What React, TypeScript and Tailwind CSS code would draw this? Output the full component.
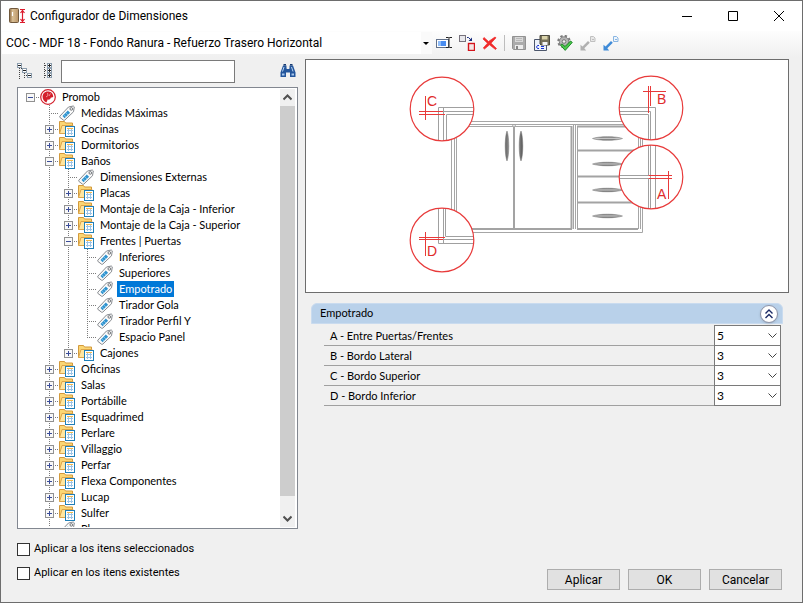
import { useState } from 'react';
import type { ReactNode } from 'react';

type IconKind = 'root' | 'tag' | 'folder';

interface TreeNode {
  label: string;
  kind: IconKind;
  open?: boolean;
  children?: TreeNode[];
}

const folder = (label: string, children: TreeNode[] = [], open = false): TreeNode => ({
  label,
  kind: 'folder',
  open,
  children,
});

const tag = (label: string): TreeNode => ({ label, kind: 'tag' });

const tree: TreeNode = {
  label: 'Promob',
  kind: 'root',
  open: true,
  children: [
    tag('Medidas Máximas'),
    folder('Cocinas'),
    folder('Dormitorios'),
    folder(
      'Baños',
      [
        tag('Dimensiones Externas'),
        folder('Placas'),
        folder('Montaje de la Caja - Inferior'),
        folder('Montaje de la Caja - Superior'),
        folder(
          'Frentes | Puertas',
          [
            tag('Inferiores'),
            tag('Superiores'),
            tag('Empotrado'),
            tag('Tirador Gola'),
            tag('Tirador Perfil Y'),
            tag('Espacio Panel'),
          ],
          true
        ),
        folder('Cajones'),
      ],
      true
    ),
    folder('Oficinas'),
    folder('Salas'),
    folder('Portábille'),
    folder('Esquadrimed'),
    folder('Perlare'),
    folder('Villaggio'),
    folder('Perfar'),
    folder('Flexa Componentes'),
    folder('Lucap'),
    folder('Sulfer'),
    tag('Plus'),
  ],
};

const fields = [
  { id: 'a', label: 'A - Entre Puertas/Frentes', value: '5' },
  { id: 'b', label: 'B - Bordo Lateral', value: '3' },
  { id: 'c', label: 'C - Bordo Superior', value: '3' },
  { id: 'd', label: 'D - Bordo Inferior', value: '3' },
];

function NodeIcon({ kind }: { kind: IconKind }) {
  if (kind === 'root') {
    return (
      <svg className="size-4 shrink-0" viewBox="0 0 16 16">
        <circle cx="8" cy="8" r="7.3" fill="#fff" stroke="#d3202c" strokeWidth="1.2" />
        <path d="M8.5 2.5C5 2 2.500 4.500 2.600 8c.1 2.500 1.500 4.500 3.600 5.400.9-.6 1.300-1.600 1.200-2.800 1.800.2 3.300-.5 3.300-1.900l2.500-.7c.2-3-1.900-5.200-4.700-5.500z" fill="#d3202c" />
        <path d="M7.500 4l.5 2.500-2 1.500M10.500 4.500L9 7" stroke="#f3b0b3" strokeWidth=".8" fill="none" />
      </svg>
    );
  }
  if (kind === 'tag') {
    return (
      <svg className="size-4 shrink-0" viewBox="0 0 16 16">
        <path d="M.8 11.200L9.500 2l4.800-1 1 .9-.8 4.900-8.800 8.400h-1.200L.8 12.300z" fill="#fafafa" stroke="#85898e" />
        <path d="M3.500 11L8.800 5.400l2.300 2.300-5.500 5.500z" fill="#2f93cf" />
        <path d="M5 9.800l2.300 2.300M6.800 7.900l2.300 2.300" stroke="#9fd2ee" strokeWidth=".7" />
        <circle cx="12.300" cy="3.900" r="1.300" fill="#fff" stroke="#6e7277" />
      </svg>
    );
  }
  return (
    <svg className="size-4 shrink-0" viewBox="0 0 16 16">
      <path d="M.5 12.500v-12h5l1 1.500h7v4" fill="#fbd674" stroke="#d39a3c" />
      <path d="M.5 12.500l2.500-8h11v8z" fill="#ffe6a0" stroke="#dca54a" />
      <rect x="6.500" y="5.500" width="9" height="10" fill="#fff" stroke="#1f7fb8" />
      <rect x="8" y="7" width="6" height="1" fill="#f2b84b" />
      <path d="M8 9.500h6M8 12.500h6M9.500 8v6M12.500 8v6" stroke="#9cc4e6" />
    </svg>
  );
}

interface GuideProps {
  top?: boolean;
  bottom?: boolean;
  branch?: boolean;
  expander?: 'plus' | 'minus';
}

// One 19px column of the dotted connector lines
function Guide({ top, bottom, branch, expander }: GuideProps) {
  return (
    <svg className="h-4 w-[19px] shrink-0" viewBox="0 0 19 16" stroke="#7d7d7d" fill="none" shapeRendering="crispEdges">
      {top && <path d="M9.500 0V8" strokeDasharray="1 1" />}
      {bottom && <path d="M9.500 8V16" strokeDasharray="1 1" />}
      {branch && <path d="M9 8.500H19" strokeDasharray="1 1" />}
      {expander && (
        <>
          <rect x="5.500" y="4.500" width="8" height="8" fill="#f8f8f8" stroke="#919191" />
          <path d="M7 8.500h5" stroke="#3a4c98" />
          {expander === 'plus' && <path d="M9.500 6v5" stroke="#3a4c98" />}
        </>
      )}
    </svg>
  );
}

interface TreeRowProps {
  node: TreeNode;
  depth: number;
  last: boolean;
  lines: boolean[];
  selected: string;
  onSelect: (label: string) => void;
}

function TreeRow({ node, depth, last, lines, selected, onSelect }: TreeRowProps) {
  const [open, setOpen] = useState(!!node.open);
  const isSelected = selected === node.label;
  const guide = (
    <Guide top={depth > 0} bottom={depth > 0 && !last} branch expander={node.children ? (open ? 'minus' : 'plus') : undefined} />
  );

  return (
    <li>
      <div className="flex h-4 items-center">
        {lines.map((on, i) => (
          <Guide key={i} top={on} bottom={on} />
        ))}
        {node.children ? (
          <button aria-label={node.label} onClick={() => setOpen(!open)} className="shrink-0">
            {guide}
          </button>
        ) : (
          guide
        )}
        <NodeIcon kind={node.kind} />
        <button
          onClick={() => onSelect(node.label)}
          className={`ml-1 h-4 px-0.5 leading-4 whitespace-nowrap ${isSelected ? 'bg-[#0078d7] text-white' : ''}`}
        >
          {node.label}
        </button>
      </div>
      {open && node.children && (
        <ul>
          {node.children.map((child, i) => (
            <TreeRow
              key={child.label}
              node={child}
              depth={depth + 1}
              last={i === node.children!.length - 1}
              lines={[...lines, depth > 0 && !last]}
              selected={selected}
              onSelect={onSelect}
            />
          ))}
        </ul>
      )}
    </li>
  );
}

function ToolButton({ label, disabled, children }: { label: string; disabled?: boolean; children: ReactNode }) {
  return (
    <button aria-label={label} disabled={disabled} className="flex h-[22px] w-[23px] items-center justify-center">
      <svg className="size-4" viewBox="0 0 16 16" fill="none">
        {children}
      </svg>
    </button>
  );
}

function Toolbar() {
  return (
    <div className="flex items-center">
      <ToolButton label="Renombrar">
        <rect x=".5" y="4.500" width="12" height="8" fill="#fff" stroke="#62718a" />
        <rect x="2" y="6" width="8" height="5" fill="#4a8df0" />
        <path d="M2 6h3v5H2z" fill="#8fbcf8" />
        <path d="M10 2.500h2.500l.5.500.5-.5H16M13 3v9M10 12.500h2.500l.5-.5.5.500H16" stroke="#222" />
      </ToolButton>
      <ToolButton label="Copiar">
        <rect x=".5" y=".5" width="6" height="6" fill="#e8e8ec" stroke="#77727c" />
        <rect x="9.500" y="8.500" width="6" height="7" fill="#f4e6e6" stroke="#d4141c" strokeWidth="1.400" />
        <path d="M8 2.500h1.500L12 5" stroke="#1c2f80" />
        <path d="M13 2.500V6H9.500z" fill="#1c2f80" />
      </ToolButton>
      <ToolButton label="Eliminar">
        <path d="M2 2.500l4.500 4L13 2l1 .8-5 5.400 5.500 5.300-1 1L7.500 9.800 2.500 14 1.300 13l4.200-4.800L1 4z" fill="#f02a2a" stroke="#f02a2a" strokeWidth=".7" />
      </ToolButton>
      <div className="mr-0.5 ml-[3px] h-4 w-px bg-[#bdbdbd]" />
      <ToolButton label="Guardar" disabled>
        <path d="M1.500 1.500h13v13h-12l-1-1z" fill="#ababab" stroke="#929292" />
        <path d="M4 2h8v5H4z" fill="#d9d9d9" />
        <path d="M4 10h8v4H4z" fill="#ececec" />
        <path d="M5 11h2v3H5z" fill="#858585" />
        <path d="M5 3.500h6M5 5.500h6" stroke="#b8b8b8" />
      </ToolButton>
      <ToolButton label="Guardar como">
        <path d="M.5 15.500v-11h12v11z" fill="#eef3fa" stroke="#4c566b" />
        <path d="M6 .5h9.500V10H7L6 9z" fill="#77715a" stroke="#4c4a3f" />
        <path d="M8 1h5.500v3.500H8z" fill="#d9d2a9" />
        <path d="M8.500 7h5v3h-5z" fill="#f4f4f4" />
        <path d="M5 10.500H3.500L2.500 12l1 1.500H5M7 11.500h3M7 13.500h3" stroke="#1731d6" />
      </ToolButton>
      <ToolButton label="Validar">
        <circle cx="7" cy="6.500" r="5.600" stroke="#7b7b7b" strokeWidth="2.200" strokeDasharray="2.300 2.100" />
        <circle cx="7" cy="6.500" r="4.700" fill="#b5b5b5" stroke="#858585" />
        <circle cx="7" cy="6.500" r="1.800" fill="#f2f2f2" stroke="#777" />
        <path d="M3.500 10.200L5 8.900l3 2.700 5.600-5.600 1.700 1.400-7.100 8z" fill="#4cc74c" stroke="#178224" strokeWidth=".9" />
      </ToolButton>
      <ToolButton label="Importar" disabled>
        <path d="M.5 15.500V9.800l2 1.700 5.500-5.500 1.800 1.800-5.500 5.500 1.900 2.200z" fill="#b0b0b0" />
        <path d="M10.500 1.500h3l1.500 1.500v3.500h-4.500zM12 4.500h2" fill="#e7e7e7" stroke="#c0c0c0" />
      </ToolButton>
      <ToolButton label="Exportar">
        <path d="M.5 15.500V9.800l2 1.700 5.500-5.500 1.800 1.800-5.500 5.500 1.900 2.200z" fill="#3f8bd8" />
        <path d="M10.500 1.500h3l1.500 1.500v3.500h-4.500zM12 4.500h2" fill="#eef5fc" stroke="#88b5e2" />
      </ToolButton>
    </div>
  );
}

const hinges = [
  { id: 'c', cx: 442, cy: 109 },
  { id: 'b', cx: 651, cy: 108 },
  { id: 'a', cx: 651, cy: 177 },
  { id: 'd', cx: 442, cy: 240 },
];

function CabinetDrawing() {
  return (
    <svg className="h-[232px] w-[300px]" viewBox="397 60 300 232" fill="none" role="img" aria-label="Empotrado">
      <defs>
        {hinges.map((h) => (
          <clipPath key={h.id} id={`lens-${h.id}`}>
            <circle cx={h.cx} cy={h.cy} r="32" />
          </clipPath>
        ))}
        <linearGradient id="handle" x1="0" x2="0" y1="0" y2="1">
          <stop offset="0" stopColor="#666" />
          <stop offset=".5" stopColor="#c4c4c4" />
          <stop offset="1" stopColor="#555" />
        </linearGradient>
        <linearGradient id="handle-v">
          <stop offset="0" stopColor="#666" />
          <stop offset=".5" stopColor="#c4c4c4" />
          <stop offset="1" stopColor="#555" />
        </linearGradient>
      </defs>

      {/* Carcass */}
      <g stroke="#a6a6a6">
        <path d="M451.500 121.500H642.500V232.500H451.500z" />
        <path d="M454 124.500H640M454.500 124V230M456.500 126V229M456 126.500H572" />
        <path d="M573.500 124V229M575.500 124V229M638.500 126V229M640.500 124V229" />
      </g>
      <g stroke="#a3a3a3">
        <path d="M456 229H572M571.500 126V229M514 126V229" strokeWidth="2" />
        <path d="M577 126.500H638M577 150.500H638M577 176.500H638M577 202.500H638M577 229H638" strokeWidth="1.800" />
        <path d="M577.500 126V229" />
      </g>
      <path d="M512 125h4l-2 2z" fill="#fff" stroke="#a3a3a3" strokeWidth=".6" />
      <g fill="url(#handle-v)" stroke="#777" strokeWidth=".5">
        <path d="M507 131c2.400 6 2.400 24 0 30c-2.400-6-2.400-24 0-30zM521 131c2.400 6 2.400 24 0 30c-2.400-6-2.400-24 0-30z" />
      </g>
      <g fill="url(#handle)" stroke="#777" strokeWidth=".5">
        {[138.500, 164, 190, 216].map((y) => (
          <path key={y} d={`M592.500 ${y}c6-2.400 24-2.400 30 0c-6 2.400-24 2.400-30 0z`} />
        ))}
      </g>

      {/* Magnified corners */}
      {hinges.map((h) => (
        <circle key={h.id} cx={h.cx} cy={h.cy} r="32" fill="#fff" />
      ))}
      <g stroke="#a0a0a0">
        <path clipPath="url(#lens-c)" d="M438.500 142V107.500H475M443.500 142V107.500M438 111.500H475M446.500 142V114.500H475" />
        <path clipPath="url(#lens-b)" d="M618 107.500H655.500V142M618 111.500H650.500V142M618 114.500H648.500V142" />
        <path clipPath="url(#lens-a)" d="M655.500 144V210M650.500 144V210M648.500 144V175.500H618M618 178.500H648.500V210" />
        <path clipPath="url(#lens-d)" d="M438.500 207V243.500H475M443.500 207V243.500M443 239.500H475M445.500 207V236.500H475" />
      </g>
      <g stroke="#e83a3a">
        {hinges.map((h) => (
          <circle key={h.id} cx={h.cx} cy={h.cy} r="31.800" strokeWidth="1.200" />
        ))}
        <path d="M425.500 96V120M419 111.500H443M419 114.500H445" />
        <path d="M648.500 86V113M650.500 86V106M643 91.500H666" />
        <path d="M648.500 175.500H672M648.500 178.500H672M668.500 171V199" />
        <path d="M419 237.500H445M419 239.500H443M425.500 232V256" />
      </g>
      <g fill="#e02b2b" className="font-['Liberation_Sans',sans-serif] text-[14px]">
        <text x="427" y="106">C</text>
        <text x="657" y="104">B</text>
        <text x="657" y="199">A</text>
        <text x="427" y="256">D</text>
      </g>
    </svg>
  );
}

function Chevron({ className, up }: { className: string; up?: boolean }) {
  return (
    <svg className={className} viewBox="0 0 9 9" fill="none" stroke="currentColor">
      <path d={up ? 'M.5 6.500l4-4 4 4' : 'M.5 2.500l4 4 4-4'} />
    </svg>
  );
}

export default function App() {
  const [selected, setSelected] = useState('Empotrado');

  return (
    <div className="flex h-screen flex-col border border-[#6d6d6d] bg-[#f0f0f0] font-[Roboto,'Liberation_Sans',sans-serif] text-[11px] text-black">
      {/* Title bar */}
      <header className="flex h-[30px] shrink-0 items-center bg-white pl-2">
        <svg className="h-4 w-[18px]" viewBox="0 0 18 16">
          <defs>
            <linearGradient id="door">
              <stop offset="0" stopColor="#8d6b45" />
              <stop offset=".35" stopColor="#d9bf95" />
              <stop offset="1" stopColor="#b99467" />
            </linearGradient>
          </defs>
          <rect x=".5" y=".5" width="9" height="14" rx="1" fill="url(#door)" stroke="#70583c" />
          <path d="M3.500 4v4" stroke="#fff" strokeWidth="1.200" />
          <path d="M11 1.500h5M11 14.500h5M13.500 2v12M11.500 5l2-2.500 2 2.500M11.500 11l2 2.500 2-2.500" stroke="#dc1a2c" strokeWidth="1.200" fill="none" />
        </svg>
        <h1 className="ml-[3px] flex-1 text-xs">Configurador de Dimensiones</h1>
        <button aria-label="Minimizar" className="flex h-full w-[46px] items-center justify-center">
          <svg className="size-[10px]" viewBox="0 0 10 10" stroke="#000"><path d="M0 5.500h10" /></svg>
        </button>
        <button aria-label="Maximizar" className="flex h-full w-[46px] items-center justify-center">
          <svg className="size-[10px]" viewBox="0 0 10 10" stroke="#000" fill="none"><path d="M.5.500h9v9h-9z" /></svg>
        </button>
        <button aria-label="Cerrar" className="flex h-full w-[46px] items-center justify-center">
          <svg className="size-[10px]" viewBox="0 0 10 10" stroke="#000"><path d="M0 0l10 10M10 0L0 10" /></svg>
        </button>
      </header>

      {/* Model selector and toolbar */}
      <div className="flex h-[27px] shrink-0 items-start bg-linear-to-b from-[#fdfdfd] to-[#f0f0f0] pt-px">
        <div className="relative ml-px">
          <select
            aria-label="Modelo"
            className="block h-[22px] w-[430px] appearance-none bg-white pl-1 text-xs outline-none"
          >
            <option>COC - MDF 18 - Fondo Ranura - Refuerzo Trasero Horizontal</option>
          </select>
          <svg className="pointer-events-none absolute top-0 right-0 h-[22px] w-[11px] bg-[#fafafa]" viewBox="0 0 11 22">
            <path d="M2 10h6l-3 3z" fill="#000" />
          </svg>
        </div>
        <Toolbar />
      </div>

      <div className="flex min-h-0 flex-1 pr-[13px]">
        {/* Tree column */}
        <aside className="ml-4 flex w-[281px] shrink-0 flex-col">
          <div className="flex h-[29px] items-center pb-[3px]">
            <button aria-label="Contraer todo" className="w-[21px]">
              <svg className="size-4" viewBox="0 0 16 16" fill="none" shapeRendering="crispEdges">
                <path d="M2.500 5v11M7.500 10v6M4 5.500h5M9 12.500h2" stroke="#444" strokeDasharray="1 1" />
                <g fill="#fff" stroke="#8b9cac">
                  <path d="M.5.500h4v4h-4zM5.500 5.500h4v4h-4zM10.500 10.500h4v4h-4z" />
                </g>
                <path d="M1 2.500h3M6 7.500h3M11 12.500h3" stroke="#222" />
              </svg>
            </button>
            <button aria-label="Expandir todo" className="w-[23px] pl-1">
              <svg className="size-4" viewBox="0 0 16 16" fill="none" shapeRendering="crispEdges">
                <path d="M2.500 0v16M3 2.500h3M3 7.500h3M3 12.500h3" stroke="#444" strokeDasharray="1 1" />
                <g fill="#fff" stroke="#8b9cac">
                  <path d="M5.500.500h4v4h-4zM5.500 5.500h4v4h-4zM5.500 10.500h4v4h-4z" />
                </g>
                <path d="M6 2.500h3M6 7.500h3M6 12.500h3M7.500 1v3M7.500 6v3M7.500 11v3" stroke="#222" />
              </svg>
            </button>
            <input aria-label="Buscar" className="h-[23px] w-[174px] border border-[#7a7a7a] bg-white px-1 outline-none" />
            <button aria-label="Buscar siguiente" className="ml-auto pr-[2px]">
              <svg className="size-4" viewBox="0 0 16 16">
                <path d="M3 2.500h3.500v3L7 6h2l.5-.5v-3H13l2.500 7v4.500h-5.500V9.500H6V14H.5V9.500z" fill="#24569c" />
                <path d="M3.500 1h2.500v1.500H3.500zM10 1h2.500v1.500H10z" fill="#173a70" />
                <path d="M2 10.500h2.500v2H2zM11.500 10.500H14v2h-2.500z" fill="#a8c8ee" />
                <path d="M4 4L2.500 8.500M11.500 4l1.500 4.500" stroke="#b9d4f2" />
              </svg>
            </button>
          </div>

          <div className="flex min-h-0 flex-1 border border-[#828790] bg-white py-px pr-[2px]">
            <ul className="min-w-0 flex-1 overflow-hidden pl-[3px] font-[Lato,sans-serif]">
              <TreeRow node={tree} depth={0} last lines={[]} selected={selected} onSelect={setSelected} />
            </ul>
            <div className="flex w-[15px] shrink-0 flex-col items-center bg-[#f0f0f0] text-[#505050]">
              <Chevron up className="my-1 size-[9px] stroke-2" />
              <div className="w-full flex-1 bg-[#cdcdcd]" />
              <Chevron className="mt-[18px] mb-1 size-[9px] stroke-2" />
            </div>
          </div>

          <div className="flex h-[73px] shrink-0 flex-col gap-[10px] pt-[13px]">
            {['Aplicar a los itens seleccionados', 'Aplicar en los itens existentes'].map((text) => (
              <label key={text} className="flex h-[14px] items-center gap-1">
                <input type="checkbox" className="size-[13px] appearance-none border border-[#333] bg-white checked:bg-[#0078d7]" />
                {text}
              </label>
            ))}
          </div>
        </aside>

        {/* Preview and values */}
        <main className="ml-[7px] flex min-w-0 flex-1 flex-col">
          <div className="mt-px flex h-[234px] shrink-0 justify-center border border-[#6d6d6d] bg-white">
            <CabinetDrawing />
          </div>

          <section className="mt-[10px] mr-[6px] ml-[6px] font-[Lato,sans-serif]">
            <div className="flex h-[21px] items-center justify-between rounded-t-md border border-[#c9dbef] bg-[#b9d1ea] pr-1 pl-2">
              <h2>Empotrado</h2>
              <button aria-label="Contraer" className="rounded-full border border-[#8d93a8] bg-white p-[3px] text-[#1c2b66] shadow">
                <svg className="size-[10px]" viewBox="0 0 10 10" fill="none" stroke="currentColor" strokeWidth="1.400">
                  <path d="M1.500 4.500L5 1l3.500 3.500M1.500 9L5 5.500 8.500 9" />
                </svg>
              </button>
            </div>
            <div className="mt-px mr-[2px] ml-[13px]">
              {fields.map((field) => (
                <div key={field.id} className="flex h-5">
                  <label htmlFor={field.id} className="flex h-[21px] flex-1 items-center border-b border-[#a0a0a0] pt-0.5 pl-[6px]">
                    {field.label}
                  </label>
                  <div className="relative">
                    <select
                      id={field.id}
                      defaultValue={field.value}
                      className="block h-[21px] w-[67px] appearance-none border border-[#7a7a7a] bg-white pl-[2px] text-xs outline-none"
                    >
                      {['1', '2', '3', '4', '5'].map((v) => (
                        <option key={v}>{v}</option>
                      ))}
                    </select>
                    <Chevron className="pointer-events-none absolute top-[6px] right-1 size-[9px] text-[#444]" />
                  </div>
                </div>
              ))}
            </div>
          </section>

          <footer className="mt-auto mr-[7px] mb-3 flex justify-end gap-2 text-xs">
            {['Aplicar', 'OK', 'Cancelar'].map((text) => (
              <button key={text} className="h-[21px] w-[73px] border border-[#adadad] bg-[#e1e1e1]">
                {text}
              </button>
            ))}
          </footer>
        </main>
      </div>
    </div>
  );
}
